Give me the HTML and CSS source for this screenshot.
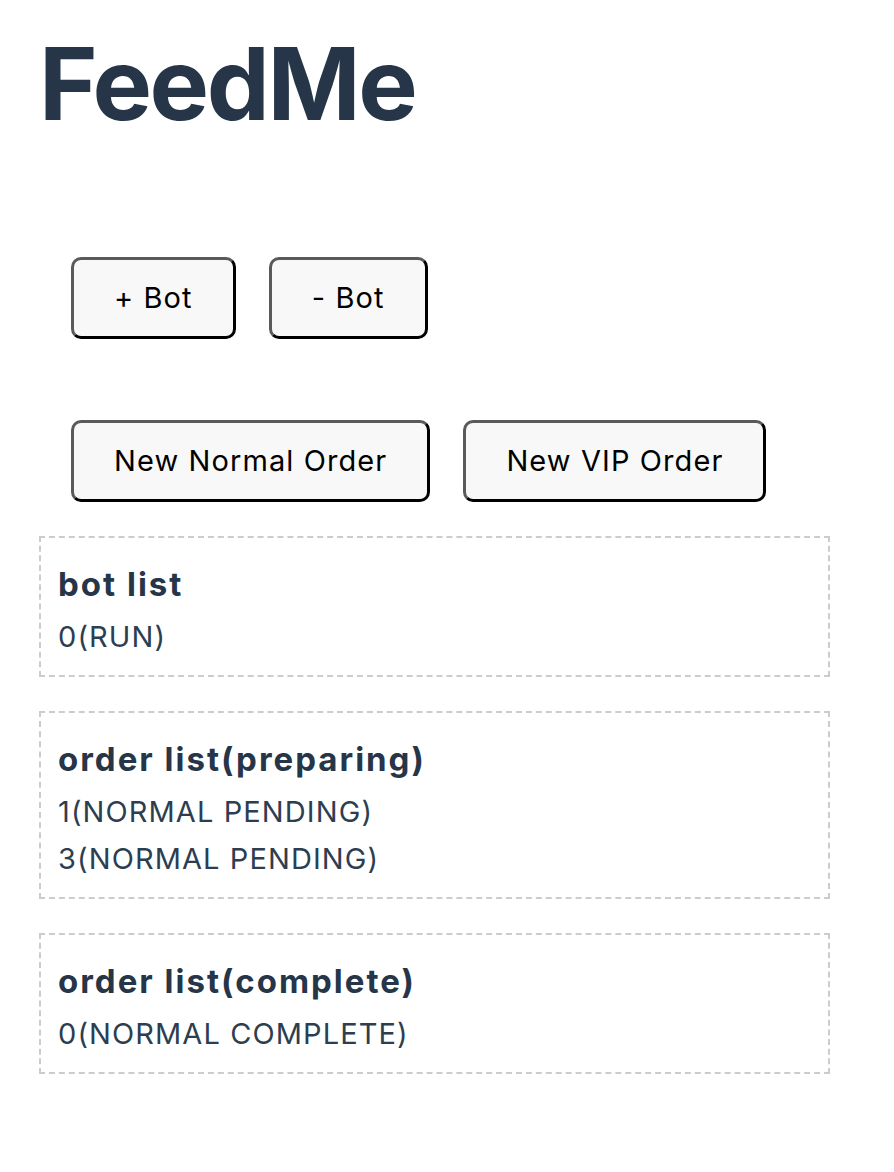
FILE: index.html
```html
<!DOCTYPE html>
<html lang="en">
<head>
<meta charset="utf-8">
<title>FeedMe</title>
<link rel="stylesheet" href="styles.css">
</head>
<body>
<div class="app">
  <h1 class="title">FeedMe</h1>
  <div class="controls">
    <div class="btn-row">
      <button class="btn">+ Bot</button>
      <button class="btn">- Bot</button>
    </div>
    <div class="btn-row">
      <button class="btn">New Normal Order</button>
      <button class="btn">New VIP Order</button>
    </div>
  </div>
  <div class="lists">
    <section class="panel">
      <h2 class="panel-title">bot list</h2>
      <div class="item">0(RUN)</div>
    </section>
    <section class="panel">
      <h2 class="panel-title">order list(preparing)</h2>
      <div class="item">1(NORMAL PENDING)</div>
      <div class="item">3(NORMAL PENDING)</div>
    </section>
    <section class="panel">
      <h2 class="panel-title">order list(complete)</h2>
      <div class="item">0(NORMAL COMPLETE)</div>
    </section>
  </div>
</div>
</body>
</html>
```

FILE: styles.css
```css
html, body {
  margin: 0;
  padding: 0;
  background: #ffffff;
}

.app {
  width: 791px;
  padding: 24px 0 0 39px;
  font-family: Inter, "Liberation Sans", sans-serif;
  color: #263648;
}

.title {
  margin: 0;
  font-size: 100px;
  line-height: 120px;
  font-weight: 700;
  letter-spacing: -2.4px;
}

.controls {
  display: flex;
  flex-direction: column;
  gap: 81px;
  padding: 113px 0 34px 32px;
}

.btn-row {
  display: flex;
  gap: 33px;
}

.btn {
  font-family: Inter, "Liberation Sans", sans-serif;
  font-size: 29px;
  line-height: 34px;
  letter-spacing: 1.1px;
  color: #000;
  background: #f8f8f8;
  padding: 21px 40px;
  border: 3px solid;
  border-color: #5a5a5a #000 #000 #5a5a5a;
  border-radius: 10px;
  height: 82px;
}

.lists {
  display: flex;
  flex-direction: column;
  gap: 34px;
}

.panel {
  border: 2px dashed #cccccc;
  padding: 24px 17px 15px;
}

.panel-title {
  margin: 0 0 7px;
  font-size: 33px;
  line-height: 44px;
  font-weight: 700;
  letter-spacing: 2px;
}

.item {
  font-size: 29px;
  line-height: 47px;
  letter-spacing: 1.1px;
  color: #2c3e50;
}
```
